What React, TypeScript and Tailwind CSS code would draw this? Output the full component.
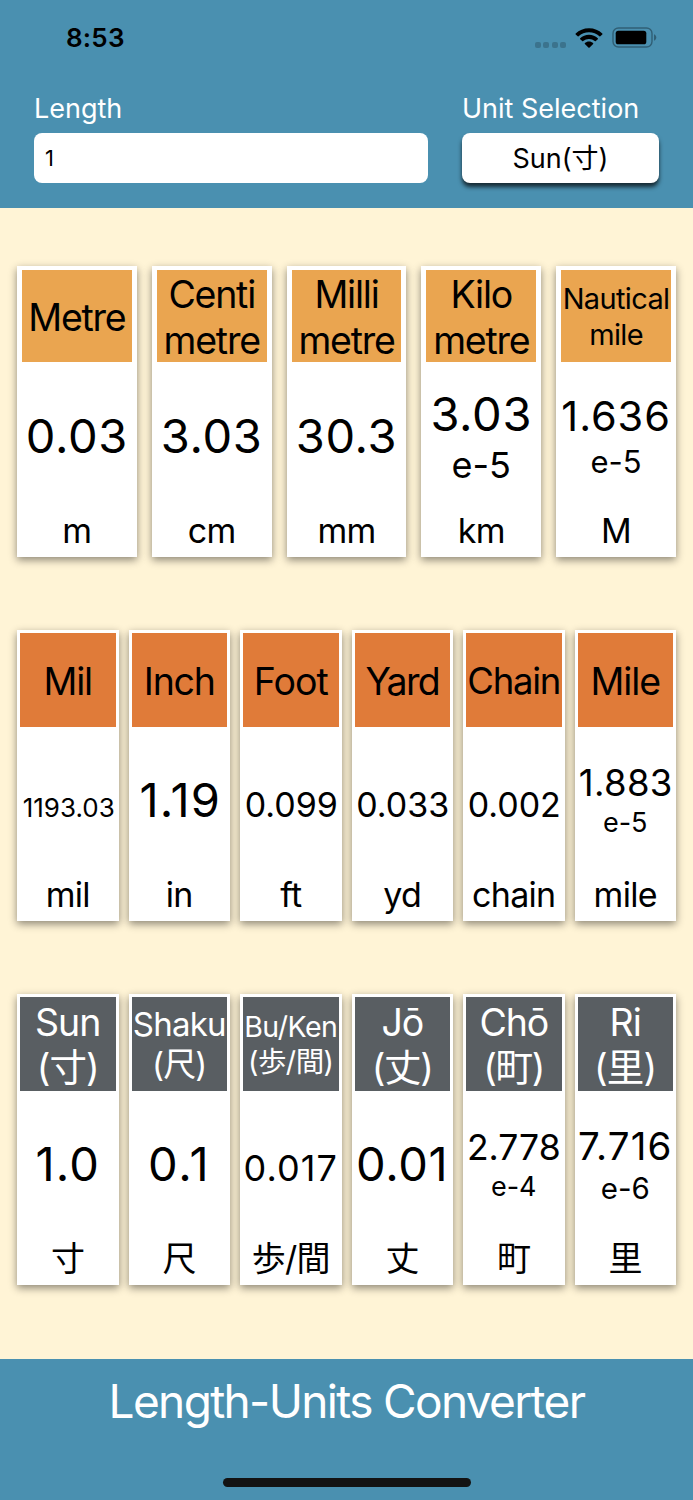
import type { JSX } from "react";

interface Unit {
  name: string[];
  nameStyle: string;
  value: string;
  valueStyle: string;
  exponent?: string;
  exponentStyle?: string;
  symbol: string;
}

interface UnitRow {
  id: string;
  gap: string;
  card: string;
  header: string;
  units: Unit[];
}

const rows: UnitRow[] = [
  {
    id: "metric",
    gap: "gap-[15px]",
    card: "px-[5px] pt-1",
    header: "h-[92px] bg-[#eaa550] pt-[3px]",
    units: [
      { name: ["Metre"], nameStyle: "text-[37.5px] tracking-[-0.033em]", value: "0.03", valueStyle: "text-[47px] tracking-[0.015em]", symbol: "m" },
      { name: ["Centi", "metre"], nameStyle: "text-[37.5px] tracking-[-0.033em]", value: "3.03", valueStyle: "text-[47px] tracking-[0.015em]", symbol: "cm" },
      { name: ["Milli", "metre"], nameStyle: "text-[37.5px] tracking-[-0.033em]", value: "30.3", valueStyle: "text-[47px] tracking-[0.015em]", symbol: "mm" },
      {
        name: ["Kilo", "metre"],
        nameStyle: "text-[37.5px] tracking-[-0.033em]",
        value: "3.03",
        valueStyle: "text-[47px] tracking-[0.015em]",
        exponent: "e-5",
        exponentStyle: "text-[36px] leading-[1.32]",
        symbol: "km",
      },
      {
        name: ["Nautical", "mile"],
        nameStyle: "text-[29px] tracking-[-0.022em] pb-[2px]",
        value: "1.636",
        valueStyle: "text-[41.5px] tracking-[0.022em]",
        exponent: "e-5",
        exponentStyle: "text-[31px] leading-[1.27]",
        symbol: "M",
      },
    ],
  },
  {
    id: "imperial",
    gap: "gap-[10px]",
    card: "px-[3px] pt-[3px]",
    header: "h-[94px] bg-[#e07b39] pt-[3px]",
    units: [
      { name: ["Mil"], nameStyle: "text-[37.5px] tracking-[-0.033em]", value: "1193.03", valueStyle: "text-[26px] pl-[2px]", symbol: "mil" },
      { name: ["Inch"], nameStyle: "text-[37.5px] tracking-[-0.033em]", value: "1.19", valueStyle: "text-[47px] tracking-[0.025em] pl-[2px]", symbol: "in" },
      { name: ["Foot"], nameStyle: "text-[37.5px] tracking-[-0.025em]", value: "0.099", valueStyle: "text-[34px] pl-px", symbol: "ft" },
      { name: ["Yard"], nameStyle: "text-[37.5px] tracking-[-0.045em]", value: "0.033", valueStyle: "text-[34px] pl-px", symbol: "yd" },
      { name: ["Chain"], nameStyle: "text-[36.5px] tracking-[-0.035em]", value: "0.002", valueStyle: "text-[34px] pl-px", symbol: "chain" },
      {
        name: ["Mile"],
        nameStyle: "text-[37.5px] tracking-[-0.03em]",
        value: "1.883",
        valueStyle: "text-[36.5px] tracking-[0.01em] pl-px",
        exponent: "e-5",
        exponentStyle: "text-[27px] leading-[1.22]",
        symbol: "mile",
      },
    ],
  },
  {
    id: "japanese",
    gap: "gap-[10px]",
    card: "px-[3px] pt-[3px]",
    header: "h-[94px] bg-[#595e62] pt-[2px] text-white",
    units: [
      { name: ["Sun", "(寸)"], nameStyle: "text-[37.5px] tracking-[-0.025em]", value: "1.0", valueStyle: "text-[47px] tracking-[0.025em]", symbol: "寸" },
      { name: ["Shaku", "(尺)"], nameStyle: "text-[33px] tracking-[-0.024em]", value: "0.1", valueStyle: "text-[47px] tracking-[0.04em]", symbol: "尺" },
      {
        name: ["Bu/Ken", "(歩/間)"],
        nameStyle: "text-[28.5px] tracking-[-0.018em] pb-px",
        value: "0.017",
        valueStyle: "text-[36px] tracking-[0.03em]",
        symbol: "歩/間",
      },
      { name: ["Jō", "(丈)"], nameStyle: "text-[37.5px] tracking-[-0.033em]", value: "0.01", valueStyle: "text-[47px] tracking-[0.015em]", symbol: "丈" },
      {
        name: ["Chō", "(町)"],
        nameStyle: "text-[37.5px] tracking-[-0.033em]",
        value: "2.778",
        valueStyle: "text-[35.5px]",
        exponent: "e-4",
        exponentStyle: "text-[27px] leading-[1.22]",
        symbol: "町",
      },
      {
        name: ["Ri", "(里)"],
        nameStyle: "text-[37.5px] tracking-[-0.02em]",
        value: "7.716",
        valueStyle: "text-[38.5px] tracking-[0.03em]",
        exponent: "e-6",
        exponentStyle: "text-[29.5px] leading-[1.2]",
        symbol: "里",
      },
    ],
  },
];

function StatusBar(): JSX.Element {
  return (
    <div className="flex h-[76px] items-center justify-between pr-9 pl-[66px] text-black">
      <span className="mb-[2px] text-[26px] font-semibold tracking-[0.2px]">8:53</span>
      <div className="flex items-center">
        <div className="mt-[14px] mr-[9px] flex gap-[2.4px]">
          {[0, 1, 2, 3].map((dot) => (
            <span key={dot} className="size-[6px] rounded-[2px] bg-[#3b738d]" />
          ))}
        </div>
        <svg className="mr-[9px] mb-px h-5 w-7" viewBox="0 0 28 20" fill="currentColor">
          <path d="M14 0.2C19.2 0.2 24 2.2 27.3 5.4C27.6 5.7 27.6 6.1 27.3 6.4L25.3 8.3C25 8.6 24.7 8.6 24.4 8.3C21.6 5.8 18 4.3 14 4.3C10 4.3 6.4 5.8 3.6 8.3C3.3 8.6 3 8.6 2.7 8.3L0.7 6.4C0.4 6.1 0.4 5.7 0.7 5.4C4 2.2 8.8 0.2 14 0.2Z" />
          <path d="M14 6.8C17.4 6.8 20.5 8.1 22.8 10.2C23.1 10.5 23.1 10.9 22.8 11.2L20.8 13.1C20.5 13.4 20.1 13.4 19.8 13.1C18.2 11.8 16.2 10.9 14 10.9C11.8 10.9 9.8 11.8 8.2 13.1C7.9 13.4 7.5 13.4 7.2 13.1L5.2 11.2C4.9 10.9 4.9 10.5 5.2 10.2C7.5 8.1 10.6 6.8 14 6.8Z" />
          <path d="M14 13.4C15.6 13.4 17 14 18.1 14.9C18.4 15.2 18.4 15.6 18.1 15.9L14.6 19.5C14.3 19.8 13.7 19.8 13.4 19.5L9.9 15.9C9.6 15.6 9.6 15.2 9.9 14.9C11 14 12.4 13.4 14 13.4Z" />
        </svg>
        <svg className="mb-px h-[21px] w-[45px]" viewBox="0 0 45 21">
          <rect x="1" y="1" width="39" height="19" rx="5.5" fill="none" stroke="#305f75" strokeWidth="1.4" />
          <rect x="3.7" y="3.7" width="30.6" height="13.6" rx="2.6" />
          <path d="M42 7.2C43.3 7.8 44.3 9 44.3 10.5S43.3 13.2 42 13.8Z" fill="#305f75" />
        </svg>
      </div>
    </div>
  );
}

function UnitCard({ unit, card, header }: { unit: Unit; card: string; header: string }): JSX.Element {
  return (
    <div
      className={`${card} flex h-[291px] min-w-0 flex-1 flex-col bg-white pb-[6px] text-center whitespace-nowrap shadow-[0_3px_8px_rgba(0,0,0,0.45)]`}
    >
      <div
        className={`${header} ${unit.nameStyle} flex shrink-0 flex-col items-center justify-center leading-[1.21]`}
      >
        {unit.name.map((line) => (
          <span key={line}>{line}</span>
        ))}
      </div>
      <div className={`${unit.exponent ? "" : "pb-[2px]"} flex flex-1 flex-col items-center justify-center`}>
        <div className="h-14 text-[47px] leading-[56px]">
          <span className={`${unit.valueStyle} leading-none`}>{unit.value}</span>
        </div>
        {unit.exponent && <div className={`${unit.exponentStyle} h-[45px]`}>{unit.exponent}</div>}
      </div>
      <div className="flex justify-center text-[34px] leading-10 tracking-[-0.02em]">{unit.symbol}</div>
    </div>
  );
}

export default function App(): JSX.Element {
  return (
    <div className="flex h-[1500px] w-[693px] flex-col overflow-hidden bg-[#fff4d6] font-['Inter','Noto_Sans_CJK_JP',sans-serif] text-black">
      <header className="h-[208px] bg-[#4a90b0]">
        <StatusBar />
        <div className="flex gap-[34px] px-[34px] pt-[14px]">
          <div className="flex w-[394px] flex-col">
            <label htmlFor="length" className="h-[43px] pt-px text-[27px] leading-9 text-white">
              Length
            </label>
            <input
              id="length"
              className="h-[50px] rounded-lg bg-white px-[11px] text-[22px] outline-none"
              defaultValue="1"
            />
          </div>
          <div className="flex w-[197px] flex-col">
            <span className="h-[43px] pt-px text-[27px] leading-9 whitespace-nowrap text-white">Unit Selection</span>
            <button className="h-[50px] rounded-lg bg-white pt-[2px] text-[27px] shadow-[0_4px_4px_rgba(0,0,0,0.7)]">
              Sun(寸)
            </button>
          </div>
        </div>
      </header>
      <main className="flex h-[1151px] flex-col gap-[73px] px-[17px] pt-[58px]">
        {rows.map((row) => (
          <section key={row.id} className={`${row.gap} flex`}>
            {row.units.map((unit) => (
              <UnitCard key={unit.symbol} unit={unit} card={row.card} header={row.header} />
            ))}
          </section>
        ))}
      </main>
      <footer className="flex flex-1 flex-col items-center justify-between bg-[#4a90b0] pt-[14px] pb-[13px]">
        <h1 className="text-[46px] leading-[56px] tracking-[-0.036em] text-white">Length-Units Converter</h1>
        <div className="h-[9px] w-[248px] rounded-full bg-[#131313]" />
      </footer>
    </div>
  );
}
